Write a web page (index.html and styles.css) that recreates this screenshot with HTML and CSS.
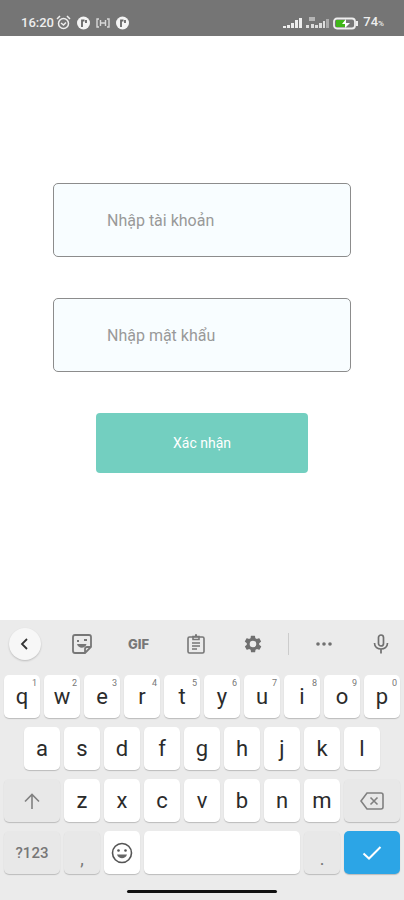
FILE: index.html
```html
<!DOCTYPE html>
<html lang="vi">
<head>
  <meta charset="UTF-8">
  <meta name="viewport" content="width=device-width, initial-scale=1.0">
  <title>Xác nhận tài khoản</title>
  <link rel="stylesheet" href="styles.css">
</head>

<body>
  <!-- status bar -->
  <header class="status">
    <div class="status-left">
      <time>16:20</time>
      <svg width="15" height="16" viewBox="0 0 15 16" fill="none" stroke="#eee" stroke-width="1.5"><circle cx="7.5" cy="8.5" r="5"/><path d="M1 4l3-3M14 4l-3-3M5 8l2.5 2L10 7.500"/></svg>
      <svg class="badge" width="13" height="14" viewBox="0 0 13 14"><circle cx="6.5" cy="7" r="6.5" fill="#f4f4f4"/><path d="M5 11V4.500h2.500M9 4v3" fill="none" stroke="#666" stroke-width="1.8"/></svg>
      <svg class="badge" width="14" height="14" viewBox="0 0 14 14" fill="none" stroke="#d8d8d8" stroke-width="1.4"><path d="M3 3H1v8h2M11 3h2v8h-2M4.500 4v6M9.500 4v6M4.500 7h5"/></svg>
      <svg class="badge" width="13" height="14" viewBox="0 0 13 14"><circle cx="6.5" cy="7" r="6.5" fill="#f4f4f4"/><path d="M5 11V4.500h2.500M9 4v3" fill="none" stroke="#666" stroke-width="1.8"/></svg>
    </div>
    <div class="status-right">
      <svg width="19" height="12" viewBox="0 0 19 12" fill="#eee"><path d="M0 9h3v2H0zM4 8h3v3H4zM8 6h3v5H8zM12 3h3v8h-3zM16 1h3v10h-3z"/></svg>
      <svg width="23" height="14" viewBox="0 0 23 14" fill="#ddd"><path d="M3 1h6v4H3z" fill="#b5b5b5"/><path d="M0 9h3v3H0zM5 8h3v4H5zM9 9h3v3H9zM13 7h3v5h-3zM17 5h2v7h-2z"/><path d="M20 3h3v9h-3z" fill="#aaa"/></svg>
      <svg width="26" height="13" viewBox="0 0 26 13"><rect x="1" y="1.5" width="21" height="10" rx="3" fill="#777" stroke="#eee" stroke-width="1.8"/><path d="M23 4h2v5h-2z" fill="#eee"/><path d="M3 3h9v7H3z" fill="#3fb618"/><path d="M13 2l-4 5h3v4l5-5h-4z" fill="#fff"/></svg>
      <span class="level">74<small>%</small></span>
    </div>
  </header>

  <main>
    <form class="login">
      <input class="field" type="text" placeholder="Nhập tài khoản" aria-label="Nhập tài khoản">
      <input class="field" type="password" placeholder="Nhập mật khẩu" aria-label="Nhập mật khẩu">
      <button class="submit" type="button">Xác nhận</button>
    </form>
  </main>

  <!-- on-screen keyboard -->
  <section class="keyboard" aria-label="Keyboard">
    <div class="tools">
      <button class="tool tool-back" type="button" aria-label="Back">
        <span class="round"><svg width="16" height="16" viewBox="0 0 16 16" fill="none" stroke="#333" stroke-width="1.8"><path d="M10 3L5 8l5 5"/></svg></span>
      </button>
      <button class="tool" type="button" aria-label="Stickers">
        <svg width="20" height="20" viewBox="0 0 20 20" fill="none" stroke="#777" stroke-width="1.8"><path d="M3 1h14q2 0 2 2v10l-6 6H3q-2 0-2-2V3q0-2 2-2zM19 13h-4q-2 0-2 2v4"/><path d="M5 7h2M12 6h3"/><path d="M5 10c1.500 5 8 5 9.500 0z" fill="#777" stroke="none"/></svg>
      </button>
      <button class="tool tool-gif" type="button">GIF</button>
      <button class="tool" type="button" aria-label="Clipboard">
        <svg width="18" height="20" viewBox="0 0 18 20" fill="none" stroke="#777" stroke-width="1.6"><rect x="1" y="3" width="16" height="16" rx="1.5"/><path d="M6 2.500h6v3H6zM5 9h8M5 12h8M5 15h5M8 1h2"/></svg>
      </button>
      <button class="tool" type="button" aria-label="Settings">
        <svg width="20" height="20" viewBox="0 0 24 24" fill="#707070"><path fill-rule="evenodd" d="M19.400 13a7.500 7.500 0 0 0 0-2l2.100-1.700a.5.5 0 0 0 .1-.6l-2-3.500a.5.5 0 0 0-.6-.2l-2.500 1a7.300 7.300 0 0 0-1.700-1l-.4-2.600a.5.500 0 0 0-.5-.4h-4a.5.500 0 0 0-.5.400L9.100 5a7.700 7.700 0 0 0-1.700 1l-2.500-1a.5.500 0 0 0-.6.200l-2 3.500a.5.500 0 0 0 .1.600L4.600 11a7.900 7.900 0 0 0 0 2l-2.100 1.700a.5.500 0 0 0-.1.600l2 3.500c.1.200.4.300.6.200l2.500-1c.5.400 1.100.7 1.700 1l.4 2.600c0 .2.200.4.500.4h4c.2 0 .5-.2.500-.4l.4-2.600c.6-.3 1.200-.6 1.700-1l2.500 1c.2.100.5 0 .6-.2l2-3.500a.5.500 0 0 0-.1-.6zM12 16a4 4 0 1 1 0-8 4 4 0 0 1 0 8z"/></svg>
      </button>
      <span class="divider"></span>
      <button class="tool" type="button" aria-label="More">
        <svg width="16" height="4" viewBox="0 0 16 4" fill="#707070"><circle cx="2" cy="2" r="1.8"/><circle cx="8" cy="2" r="1.8"/><circle cx="14" cy="2" r="1.8"/></svg>
      </button>
      <button class="tool tool-mic" type="button" aria-label="Voice input">
        <svg width="16" height="20" viewBox="0 0 16 20" fill="none" stroke="#707070" stroke-width="1.7"><rect x="5.5" y="1" width="5" height="11" rx="2.5"/><path d="M1.500 9c0 8 13 8 13 0M8 15v4.500"/></svg>
      </button>
    </div>

    <div class="keys">
      <button class="key" type="button">q<sup>1</sup></button>
      <button class="key" type="button">w<sup>2</sup></button>
      <button class="key" type="button">e<sup>3</sup></button>
      <button class="key" type="button">r<sup>4</sup></button>
      <button class="key" type="button">t<sup>5</sup></button>
      <button class="key" type="button">y<sup>6</sup></button>
      <button class="key" type="button">u<sup>7</sup></button>
      <button class="key" type="button">i<sup>8</sup></button>
      <button class="key" type="button">o<sup>9</sup></button>
      <button class="key" type="button">p<sup>0</sup></button>

      <button class="key key-indent" type="button">a</button>
      <button class="key" type="button">s</button>
      <button class="key" type="button">d</button>
      <button class="key" type="button">f</button>
      <button class="key" type="button">g</button>
      <button class="key" type="button">h</button>
      <button class="key" type="button">j</button>
      <button class="key" type="button">k</button>
      <button class="key" type="button">l</button>

      <button class="key key-wide key-alt" type="button" aria-label="Shift">
        <svg width="16" height="16" viewBox="0 0 16 16" fill="none" stroke="#808080" stroke-width="1.6"><path d="M8 16V1.500M1 8.500l7-7 7 7"/></svg>
      </button>
      <button class="key" type="button">z</button>
      <button class="key" type="button">x</button>
      <button class="key" type="button">c</button>
      <button class="key" type="button">v</button>
      <button class="key" type="button">b</button>
      <button class="key" type="button">n</button>
      <button class="key" type="button">m</button>
      <button class="key key-wide key-alt" type="button" aria-label="Delete">
        <svg width="24" height="18" viewBox="0 0 24 18" fill="none" stroke="#808080" stroke-width="1.6"><path d="M7 1h14q2 0 2 2v12q0 2-2 2H7L1 9zM10.500 5.500l7 7M17.500 5.500l-7 7"/></svg>
      </button>

      <button class="key key-wide key-alt key-num" type="button">?123</button>
      <button class="key key-alt key-punct" type="button">,</button>
      <button class="key" type="button" aria-label="Emoji">
        <svg width="22" height="22" viewBox="0 0 22 22" fill="none" stroke="#555" stroke-width="1.6"><circle cx="11" cy="11" r="9.5"/><path d="M6 12.500c1.500 5 8.500 5 10 0z" fill="#666" stroke="none"/><circle cx="7.5" cy="8.5" r="1.3" fill="#555" stroke="none"/><circle cx="14.5" cy="8.5" r="1.3" fill="#555" stroke="none"/></svg>
      </button>
      <button class="key key-space" type="button" aria-label="Space"></button>
      <button class="key key-alt key-punct" type="button">.</button>
      <button class="key key-wide key-enter" type="button" aria-label="Done">
        <svg width="20" height="16" viewBox="0 0 20 16" fill="none" stroke="#fff" stroke-width="2"><path d="M1.500 8.500l5.500 5L18.500 2"/></svg>
      </button>
    </div>
    <div class="home"></div>
  </section>
</body>
</html>
```
FILE: styles.css
```css
:root {
  --grey: #757575;
  --board: #ebebeb;
  --accent: #73cfc0;
  --blue: #2ca5e6;
  --radius: 5px;
}
* {box-sizing: border-box;font-family: Roboto, sans-serif;}
body{margin:0;display:flex;flex-direction:column;min-height:100vh;background:#fff;}
button{border:none;padding:0;background:none;cursor:pointer;}
svg{display:block;flex:none;}

.status{display:flex;justify-content:space-between;align-items:flex-end;height:36px;padding:0 20px 4px 21px;background:var(--grey);color:#eee;font-size:13px;font-weight:500;line-height:18px;}
.status-left,.status-right{display:flex;align-items:center;height:18px;}
.status-left{gap:2px;}
.status-left .badge{margin-left:4px;}
.status-right{gap:4px;}
.level small{font-size:8px;}

main{flex:1;padding:147px 53px 40px;}
.login{display:flex;flex-direction:column;align-items:center;gap:41px;}
.field{width:100%;height:74px;padding:0 53px;border:1px solid #8c8c8c;border-radius:var(--radius);background:#f8fdff;font-size:16px;color:#333;}
.field::placeholder{color:#999;opacity:1;}
.submit{width:71%;height:60px;border-radius:4px;background:var(--accent);color:#fff;font-size:14px;}

.keyboard{background:var(--board);padding-bottom:7px;}
.tools{display:grid;grid-template-columns:53fr 57fr 57fr 57fr 57fr 14fr 57fr 52fr;align-items:center;height:48px;}
.tool{display:flex;align-items:center;justify-content:center;height:40px;}
.tool-back{padding-right:4px;}
.tool-mic{padding-left:6px;}
.tool-gif{font-family:Inter, sans-serif;font-size:13px;font-weight:800;color:#777;}
.round{display:flex;align-items:center;justify-content:center;width:32px;height:32px;border-radius:50%;background:#f7f7f7;box-shadow:0 1px 2px #0003;}
.divider{justify-self:center;width:1px;height:22px;background:#ccc;}

/* 20 half-key columns, a letter takes two */
.keys{display:grid;grid-template-columns:repeat(20,1fr);grid-auto-rows:43px;gap:9px 4px;padding:7px 4px 0;}
.key{position:relative;grid-column:span 2;display:flex;align-items:center;justify-content:center;border-radius:var(--radius);background:#fff;box-shadow:0 1px 1px #0003;color:#2b2b2b;font-size:22px;line-height:26px;}
.key sup{position:absolute;top:3px;right:3px;font-size:9px;line-height:10px;color:#777;}
.key-indent{grid-column:2 / span 2;}
.key-wide{grid-column:span 3;}
.key-space{grid-column:span 8;}
.key-alt{background:#e8e8e8;color:#777;}
.key-num{font-size:15px;font-weight:500;}
.key-punct{font-size:18px;padding-top:12px;}
.key-enter{background:var(--blue);}
.home{width:37%;height:3px;margin:16px auto 0;border-radius:2px;background:#111;}
```
